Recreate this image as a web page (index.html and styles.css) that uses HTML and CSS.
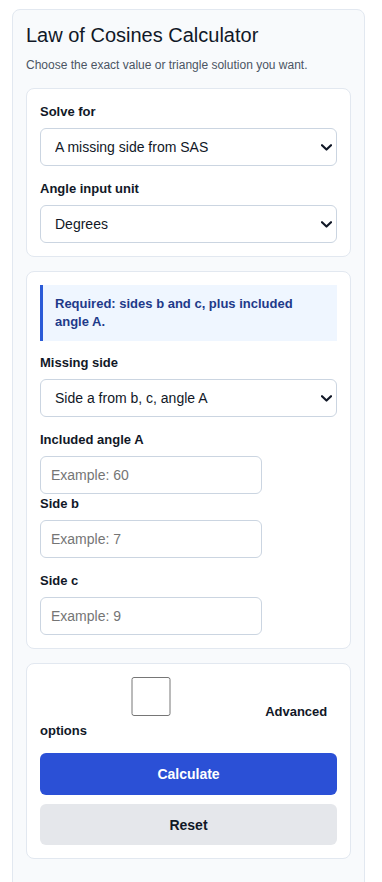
FILE: index.html
```html
<!DOCTYPE html>
<html lang="en">
<head>
<meta charset="utf-8">
<title>Law of Cosines Calculator</title>
<link rel="stylesheet" href="styles.css">
</head>
<body>
<div class="page">
  <div class="calc">
    <h1 class="title">Law of Cosines Calculator</h1>
    <p class="subtitle">Choose the exact value or triangle solution you want.</p>

    <section class="card">
      <div class="field">
        <label class="label" for="mode">Solve for</label>
        <div class="select-wrap">
          <select id="mode" class="control select">
            <option>A missing side from SAS</option>
          </select>
          <svg class="chevron" width="11" height="7" viewBox="0 0 11 7" aria-hidden="true"><path d="M1 1.2 L5.5 5.5 L10 1.2" fill="none" stroke="#111827" stroke-width="2.2" stroke-linecap="round" stroke-linejoin="round"/></svg>
        </div>
      </div>
      <div class="field field-last">
        <label class="label" for="unit">Angle input unit</label>
        <div class="select-wrap">
          <select id="unit" class="control select">
            <option>Degrees</option>
          </select>
          <svg class="chevron" width="11" height="7" viewBox="0 0 11 7" aria-hidden="true"><path d="M1 1.2 L5.5 5.5 L10 1.2" fill="none" stroke="#111827" stroke-width="2.2" stroke-linecap="round" stroke-linejoin="round"/></svg>
        </div>
      </div>
    </section>

    <section class="card">
      <div class="notice">Required: sides b and c, plus included angle A.</div>
      <div class="field">
        <label class="label" for="side">Missing side</label>
        <div class="select-wrap">
          <select id="side" class="control select">
            <option>Side a from b, c, angle A</option>
          </select>
          <svg class="chevron" width="11" height="7" viewBox="0 0 11 7" aria-hidden="true"><path d="M1 1.2 L5.5 5.5 L10 1.2" fill="none" stroke="#111827" stroke-width="2.2" stroke-linecap="round" stroke-linejoin="round"/></svg>
        </div>
      </div>
      <div class="field field-tight">
        <label class="label" for="angA">Included angle A</label>
        <input id="angA" class="control input" type="text" placeholder="Example: 60">
      </div>
      <div class="field">
        <label class="label" for="sb">Side b</label>
        <input id="sb" class="control input" type="text" placeholder="Example: 7">
      </div>
      <div class="field field-last">
        <label class="label" for="sc">Side c</label>
        <input id="sc" class="control input" type="text" placeholder="Example: 9">
      </div>
    </section>

    <section class="card">
      <label class="check-label"><input class="check" type="checkbox"> Advanced options</label>
      <button class="btn btn-primary" type="button">Calculate</button>
      <button class="btn btn-secondary" type="button">Reset</button>
    </section>
  </div>
</div>
</body>
</html>
```

FILE: styles.css
```css
* { box-sizing: border-box; }

html, body {
  margin: 0;
  padding: 0;
  background: #ffffff;
}

body {
  font-family: "Liberation Sans", Arial, sans-serif;
  color: #111827;
}

.page {
  padding: 9px 17px 0 12px;
}

.calc {
  background: #f8fafc;
  border: 1px solid #e2e8f0;
  border-radius: 8px;
  padding: 13px 13px 60px;
}

.title {
  margin: 0 0 9px;
  font-size: 20px;
  line-height: 24px;
  font-weight: 400;
  color: #111827;
}

.subtitle {
  margin: 0 0 14px;
  font-size: 12px;
  line-height: 18px;
  color: #4b5563;
}

.card {
  background: #ffffff;
  border: 1px solid #e2e8f0;
  border-radius: 8px;
  padding: 13px;
  margin-bottom: 14px;
}

.field {
  margin-bottom: 13px;
}

.field-tight,
.field-last {
  margin-bottom: 0;
}

.label {
  display: block;
  font-size: 13px;
  line-height: 19.5px;
  font-weight: 700;
  color: #111827;
  margin-bottom: 6px;
}

.control {
  display: block;
  width: 100%;
  height: 38.5px;
  margin: 0;
  padding: 0 10px;
  border: 1px solid #cbd5e1;
  border-radius: 6px;
  background: #ffffff;
  font-family: "Liberation Sans", Arial, sans-serif;
  font-size: 14px;
  color: #111827;
}

.select-wrap {
  position: relative;
}

.select {
  -webkit-appearance: none;
  appearance: none;
  padding: 0 24px 0 14px;
}

.chevron {
  position: absolute;
  right: 5px;
  top: 50%;
  margin-top: -3px;
  pointer-events: none;
}

.input {
  width: 222px;
}

.input::placeholder {
  color: #757575;
}

.notice {
  background: #eff6ff;
  border-left: 3px solid #2b5bd7;
  padding: 10px 12px;
  font-size: 13px;
  line-height: 18.2px;
  font-weight: 700;
  color: #1e3a8a;
  margin-bottom: 12px;
}

.check-label {
  display: block;
  font-size: 13px;
  line-height: 19.5px;
  font-weight: 700;
  color: #111827;
}

.check {
  width: 222px;
  height: 38.5px;
  margin: 0;
  vertical-align: baseline;
}

.btn {
  display: block;
  width: 100%;
  height: 41.5px;
  border: none;
  border-radius: 6px;
  font-family: "Liberation Sans", Arial, sans-serif;
  font-size: 14px;
  font-weight: 700;
  cursor: pointer;
}

.btn-primary {
  margin-top: 12.5px;
  background: #2b50d6;
  color: #ffffff;
}

.btn-secondary {
  margin-top: 9px;
  background: #e5e7eb;
  color: #111827;
}
```
